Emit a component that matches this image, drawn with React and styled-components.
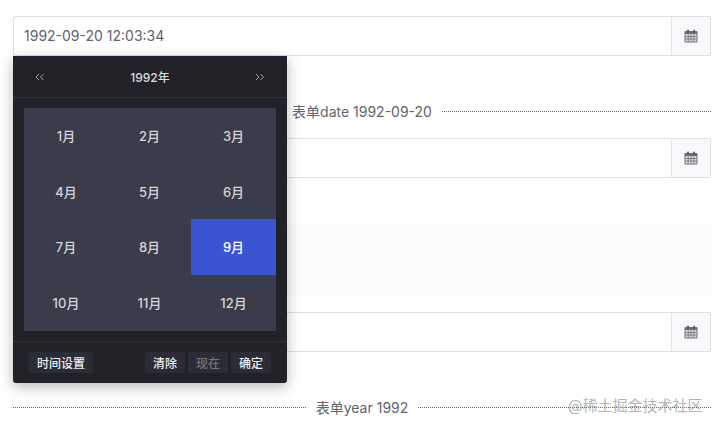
import React from "react";
import styled, { createGlobalStyle } from "styled-components";

const Global = createGlobalStyle`
  html, body { margin: 0; padding: 0; background: #fff; }
  body { font-family: Inter, "Noto Sans CJK SC", sans-serif; overflow: hidden; }
`;

const Page = styled.div`
  position: relative;
  width: 717px;
  height: 428px;
  padding: 16px 6px 0 13px;
  box-sizing: border-box;
  overflow: hidden;
`;

const Field = styled.div`
  display: flex;
  height: 40px;
  box-sizing: border-box;
  border: 1px solid #e0e0e2;
  border-radius: 2px;
  background: #fff;
  margin-bottom: ${(p) => p.$after || 0}px;
`;

const FieldValue = styled.div`
  flex: 1;
  padding-left: 10px;
  line-height: 38px;
  font-size: 14px;
  color: #626367;
`;

const Addon = styled.div`
  width: 38px;
  display: flex;
  align-items: center;
  justify-content: center;
  background: #f8f9fa;
  border-left: 1px solid #e4e4e6;
`;

const Divider = styled.div`
  display: flex;
  align-items: center;
  gap: 10px;
  height: 20px;
  margin-bottom: ${(p) => p.$after || 0}px;
  font-size: 14px;
  color: #64656a;
  white-space: nowrap;
  &::before, &::after {
    content: "";
    flex: 1;
    border-top: 1px dotted #66676b;
  }
`;

const Notice = styled.div`
  height: 71px;
  background: #fafbfc;
  margin-right: -1px;
  margin-bottom: 16px;
`;

const Popover = styled.div`
  position: absolute;
  left: 13px;
  top: 56px;
  width: 274px;
  height: 327px;
  display: flex;
  flex-direction: column;
  background: #212228;
  border-radius: 0 0 3px 3px;
  box-shadow: 0 4px 14px rgba(0, 0, 0, 0.28);
  color: #d5d6da;
`;

const Header = styled.div`
  height: 41px;
  flex: none;
  display: flex;
  align-items: center;
  justify-content: space-between;
  padding: 0 22px;
  font-size: 12px;
  border-bottom: 1px solid #303137;
`;

const Arrow = styled.span`
  display: flex;
  color: #b4b5ba;
`;

const Title = styled.span`
  color: #dcdde1;
  font-weight: 500;
  margin-top: -1px;
`;

const Months = styled.div`
  margin: 10px 11px 10px;
  height: 223px;
  padding-bottom: 1px;
  box-sizing: border-box;
  flex: none;
  display: grid;
  grid-template-columns: 84px 83px 85px;
  grid-template-rows: repeat(4, 1fr);
  background: #3a3b4b;
`;

const Month = styled.div`
  display: flex;
  align-items: center;
  justify-content: center;
  font-size: 13px;
  font-weight: 500;
  color: ${(p) => (p.$active ? "#fff" : "#d4d5da")};
  background: ${(p) => (p.$active ? "#3a55d2" : "transparent")};
`;

const Footer = styled.div`
  flex: 1;
  display: flex;
  align-items: center;
  gap: 3px;
  padding: 0 16px 0 16px;
  border-top: 1px solid #303137;
`;

const FootButton = styled.span`
  display: flex;
  align-items: center;
  justify-content: center;
  width: ${(p) => p.$w}px;
  height: 21px;
  background: #2b2d36;
  border-radius: 2px;
  font-size: 12px;
  font-weight: 500;
  color: ${(p) => (p.$muted ? "#74757b" : "#eeeef0")};
  margin-right: ${(p) => (p.$push ? "auto" : 0)};
`;

const Watermark = styled.div`
  position: absolute;
  left: 568px;
  top: 396px;
  font-size: 15px;
  line-height: 20px;
  color: rgba(160, 160, 162, 0.8);
  white-space: nowrap;
`;

const CalendarIcon = () => (
  <svg width="14" height="14" viewBox="0 0 14 14" fill="none">
    <rect x="0.5" y="2" width="13" height="11.5" rx="1" fill="#6c6d72" />
    <rect x="1.5" y="5" width="11" height="7.5" fill="#dfdfe1" />
    <path d="M1.5 7.5h11M1.5 10h11M4.2 5v7.5M7 5v7.5M9.8 5v7.5" stroke="#6c6d72" strokeWidth="0.8" />
    <rect x="3" y="0.5" width="2" height="3" rx="1" fill="#5c5d62" />
    <rect x="9" y="0.5" width="2" height="3" rx="1" fill="#5c5d62" />
  </svg>
);

const DoubleChevron = ({ left }) => (
  <svg width="10" height="8" viewBox="0 0 10 8" fill="none" stroke="currentColor" strokeWidth="0.9">
    <path d={left ? "M4 1 1 4l3 3M8.5 1l-3 3 3 3" : "M1 1l3 3-3 3M5.5 1l3 3-3 3"} />
  </svg>
);

const months = ["1月", "2月", "3月", "4月", "5月", "6月", "7月", "8月", "9月", "10月", "11月", "12月"];

export default function App() {
  return (
    <Page>
      <Global />
      <Field $after={45}>
        <FieldValue>1992-09-20 12:03:34</FieldValue>
        <Addon><CalendarIcon /></Addon>
      </Field>
      <Divider $after={17}>表单date 1992-09-20</Divider>
      <Field $after={47}>
        <FieldValue />
        <Addon><CalendarIcon /></Addon>
      </Field>
      <Notice />
      <Field $after={45}>
        <FieldValue />
        <Addon><CalendarIcon /></Addon>
      </Field>
      <Divider>表单year 1992</Divider>

      <Popover>
        <Header>
          <Arrow><DoubleChevron left /></Arrow>
          <Title>1992年</Title>
          <Arrow><DoubleChevron /></Arrow>
        </Header>
        <Months>
          {months.map((m) => (
            <Month key={m} $active={m === "9月"}>{m}</Month>
          ))}
        </Months>
        <Footer>
          <FootButton $w={64} $push>时间设置</FootButton>
          <FootButton $w={40}>清除</FootButton>
          <FootButton $w={40} $muted>现在</FootButton>
          <FootButton $w={40}>确定</FootButton>
        </Footer>
      </Popover>

      <Watermark>@稀土掘金技术社区</Watermark>
    </Page>
  );
}
